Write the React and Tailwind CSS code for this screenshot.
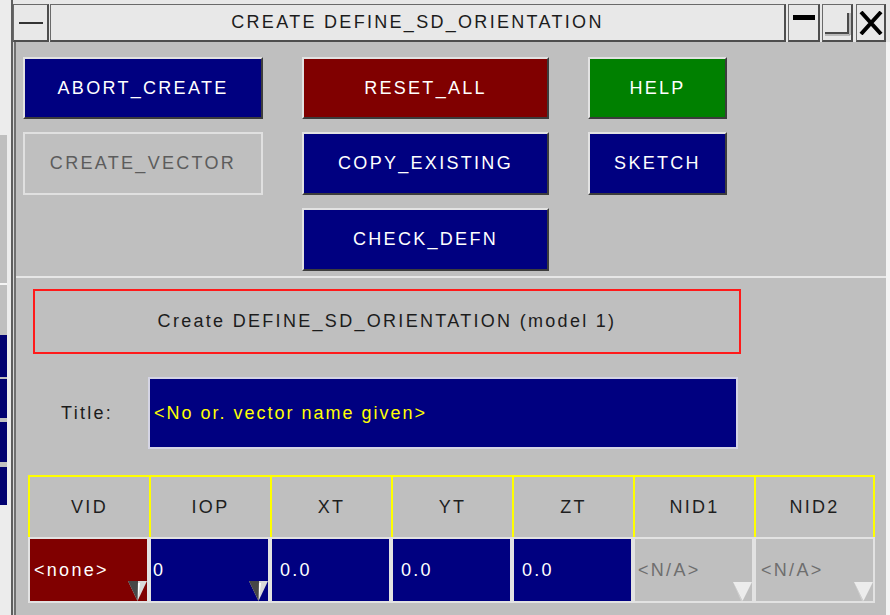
import React from "react";

const font = "font-['Liberation_Sans',Arial,sans-serif] text-[18px] tracking-[2.3px]";

function Btn({ label, color }) {
  return (
    <div
      className={`flex items-center justify-center border-2 border-t-[#e2e2e2] border-l-[#e2e2e2] border-b-[#3c3c3c] border-r-[#3c3c3c] text-white ${color}`}
    >
      {label}
    </div>
  );
}

function DropArrow({ light }) {
  if (light) {
    return (
      <svg width="19" height="19" viewBox="0 0 19 19" className="absolute right-0 bottom-0">
        <polygon points="0,0 19,0 9.5,19" fill="#ececec" />
        <polygon points="0,0 9.5,19 8,19" fill="#d0d0d0" />
      </svg>
    );
  }
  return (
    <svg width="19" height="20" viewBox="0 0 19 20" className="absolute right-0 bottom-0">
      <polygon points="0,0 19,0 9.5,20" fill="#d8d8d8" />
      <polygon points="0,0 10,0 9.5,20" fill="#474747" />
      <polygon points="10,2 12,2 10,18" fill="#ffffff" />
    </svg>
  );
}

const cols = ["VID", "IOP", "XT", "YT", "ZT", "NID1", "NID2"];

const cells = [
  { text: "<none>", bg: "bg-[#800000]", fg: "text-white", pad: "pl-[4px]", arrow: "dark" },
  { text: "0", bg: "bg-[#000080]", fg: "text-white", pad: "pl-[2px]", arrow: "dark" },
  { text: "0.0", bg: "bg-[#000080]", fg: "text-white", pad: "pl-[8px]" },
  { text: "0.0", bg: "bg-[#000080]", fg: "text-white", pad: "pl-[8px]" },
  { text: "0.0", bg: "bg-[#000080]", fg: "text-white", pad: "pl-[8px]" },
  { text: "<N/A>", bg: "bg-[#bfbfbf]", fg: "text-[#6e6e6e]", pad: "pl-[3px]", arrow: "light" },
  { text: "<N/A>", bg: "bg-[#bfbfbf]", fg: "text-[#6e6e6e]", pad: "pl-[5px]", arrow: "light" },
];

const boxEdge =
  "border-t border-l border-[#6a6a6a] border-b-2 border-r-2 border-b-[#4e4e4e] border-r-[#4e4e4e]";

export default function App() {
  return (
    <div className={`w-[890px] h-[615px] flex bg-[#ececec] overflow-hidden ${font}`}>
      {/* window behind, left edge */}
      <div className="w-[11px] flex flex-col">
        <div className="h-[135px]" />
        <div className="w-[7px] h-[148px] bg-[#bfbfbf]" />
        <div className="w-[7px] h-[2px] bg-[#f4f4f4]" />
        <div className="w-[7px] h-[50px] bg-[#bfbfbf]" />
        <div className="w-[7px] h-[42px] bg-[#000070]" />
        <div className="w-[7px] h-[2px] bg-[#bfbfbf]" />
        <div className="w-[7px] h-[39px] bg-[#000070]" />
        <div className="w-[7px] h-[4px] bg-[#bfbfbf]" />
        <div className="w-[7px] h-[40px] bg-[#000070]" />
        <div className="w-[7px] h-[5px] bg-[#bfbfbf]" />
        <div className="w-[7px] h-[38px] bg-[#000070]" />
      </div>

      {/* main window */}
      <div className="flex-1 flex flex-col border-l-2 border-[#5e5e5e]">
        {/* title bar */}
        <div className="h-[42px] flex pt-[4px] bg-[#e8e8e8]">
          <div className={`w-[36px] h-[38px] flex items-center justify-center ${boxEdge}`}>
            <div className="w-[24px] h-[2px] bg-[#333]" />
          </div>
          <div
            className={`ml-[1px] w-[736px] h-[38px] flex items-center justify-center text-[#1c1c1c] ${boxEdge}`}
          >
            CREATE DEFINE_SD_ORIENTATION
          </div>
          <div className={`ml-[2px] w-[32px] h-[38px] flex justify-center pt-[10px] ${boxEdge}`}>
            <div className="w-[22px] h-[5px] bg-black" />
          </div>
          <div className={`ml-[2px] w-[31px] h-[38px] relative ${boxEdge}`}>
            <svg width="31" height="38" viewBox="0 0 31 38" className="absolute -left-px -top-px">
              <path d="M3 29 H26 V9" fill="none" stroke="#4a4a4a" strokeWidth="2" />
              <path d="M3 31 H28 V9" fill="none" stroke="#8a8a8a" strokeWidth="1" />
            </svg>
          </div>
          <div className={`ml-[3px] w-[30px] h-[38px] flex items-center justify-center ${boxEdge}`}>
            <svg width="24" height="24" viewBox="0 0 24 24">
              <path d="M2 1 L22 23 M22 1 L2 23" stroke="#000" strokeWidth="4" />
            </svg>
          </div>
        </div>

        {/* body */}
        <div className="flex-1 flex">
          <div className="w-[1px] bg-[#d8d8d8]" />
          <div className="w-[872px] flex flex-col bg-[#bfbfbf] border-l-2 border-[#707070]">
            {/* action buttons */}
            <div className="h-[234px] pl-[7px] pt-[15px]">
              <div className="grid grid-cols-[240px_247px_139px] grid-rows-[62px_63px_63px] gap-x-[39px] gap-y-[13px]">
                <Btn label="ABORT_CREATE" color="bg-[#000080]" />
                <Btn label="RESET_ALL" color="bg-[#800000]" />
                <Btn label="HELP" color="bg-[#008000]" />
                <div className="flex items-center justify-center border-2 border-[#e0e0e0] text-[#5c5c5c]">
                  CREATE_VECTOR
                </div>
                <Btn label="COPY_EXISTING" color="bg-[#000080]" />
                <Btn label="SKETCH" color="bg-[#000080]" />
                <div />
                <Btn label="CHECK_DEFN" color="bg-[#000080]" />
              </div>
            </div>

            {/* form */}
            <div className="flex-1 flex flex-col border-t-2 border-[#e6e6e6] pt-[11px] pl-[17px]">
              <div className="w-[708px] h-[65px] flex items-center justify-center border-2 border-[#ff1a1a] text-[#1c1c1c]">
                Create DEFINE_SD_ORIENTATION (model 1)
              </div>

              <div className="mt-[23px] flex items-center">
                <div className="ml-[28px] w-[87px] text-[#1c1c1c]">Title:</div>
                <div className="w-[590px] h-[72px] flex items-center pl-[4px] bg-[#000080] border-2 border-[#d4d4e4] text-[#ffff00] tracking-[2px]">
                  &lt;No or. vector name given&gt;
                </div>
              </div>

              <div className="mt-[26px] ml-[-5px] w-[847px] flex flex-col">
                <div className="flex h-[62px]">
                  {cols.map((c, i) => (
                    <div
                      key={c}
                      className={`w-[121px] flex items-center justify-center border-t-2 border-l-2 border-[#ffff00] text-[#1e1e1e] ${
                        i === cols.length - 1 ? "border-r-2" : ""
                      }`}
                    >
                      {c}
                    </div>
                  ))}
                </div>
                <div className="flex h-[66px]">
                  {cells.map((c, i) => (
                    <div
                      key={i}
                      className={`relative w-[121px] flex items-center border-2 border-[#e2e2e2] ${c.bg} ${c.fg} ${c.pad}`}
                    >
                      {c.text}
                      {c.arrow && <DropArrow light={c.arrow === "light"} />}
                    </div>
                  ))}
                </div>
              </div>
            </div>
          </div>
          <div className="w-[4px] bg-[#f4f4f4]" />
        </div>
      </div>
    </div>
  );
}
